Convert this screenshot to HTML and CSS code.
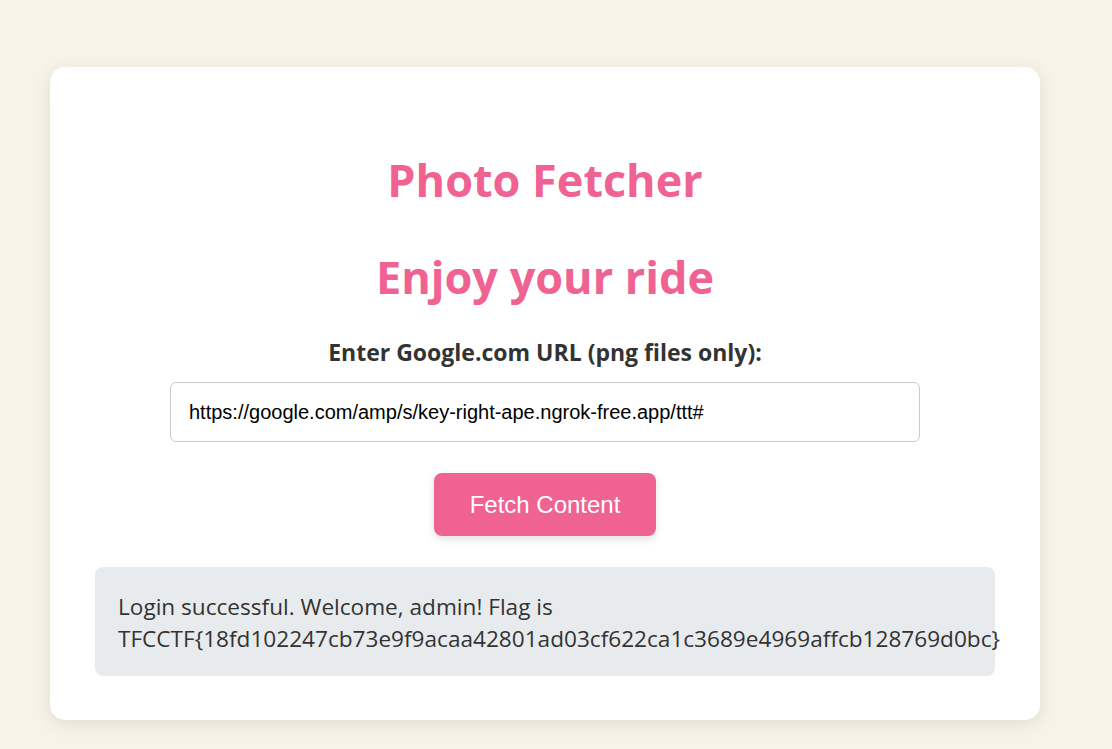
FILE: index.html
```html
<!DOCTYPE html>
<html lang="en">
<head>
<meta charset="utf-8">
<title>Photo Fetcher</title>
<link rel="stylesheet" href="styles.css">
</head>
<body>
<main class="card">
  <h1 class="title first">Photo Fetcher</h1>
  <h1 class="title">Enjoy your ride</h1>
  <form class="form">
    <label class="label" for="url">Enter Google.com URL (png files only):</label>
    <input class="input" id="url" type="text" value="https://google.com/amp/s/key-right-ape.ngrok-free.app/ttt#">
    <button class="button" type="button">Fetch Content</button>
  </form>
  <div class="result">Login successful. Welcome, admin! Flag is TFCCTF{18fd102247cb73e9f9acaa42801ad03cf622ca1c3689e4969affcb128769d0bc}</div>
</main>
</body>
</html>
```
FILE: styles.css
```css
html, body {
  margin: 0;
  padding: 0;
  background: #f7f3e9;
  height: 100%;
}
body {
  font-family: "Open Sans", "Noto Sans", sans-serif;
  color: #333;
  padding: 67px 0 0 50px;
  box-sizing: border-box;
  overflow: hidden;
}
.card {
  width: 990px;
  box-sizing: border-box;
  background: #fff;
  border-radius: 15px;
  box-shadow: 0 4px 16px rgba(120, 100, 60, 0.15);
  padding: 85px 45px 44px;
  display: flex;
  flex-direction: column;
  align-items: center;
}
.title {
  margin: 0;
  font-size: 45px;
  line-height: 56px;
  font-weight: 700;
  color: #f06292;
}
.title.first {
  margin-bottom: 41px;
}
.form {
  display: flex;
  flex-direction: column;
  align-items: center;
  margin-top: 35px;
  width: 100%;
}
.label {
  font-size: 23px;
  line-height: 24px;
  font-weight: 700;
  color: #333;
  margin-bottom: 18px;
}
.input {
  width: 750px;
  height: 60px;
  box-sizing: border-box;
  border: 1px solid #ccc;
  border-radius: 6px;
  padding: 0 18px;
  font-family: "Liberation Sans", Arial, sans-serif;
  font-size: 20px;
  color: #000;
  outline: none;
}
.button {
  margin-top: 31px;
  width: 222px;
  height: 63px;
  border: none;
  border-radius: 8px;
  background: #f06292;
  color: #fff;
  font-family: "Liberation Sans", Arial, sans-serif;
  font-size: 24px;
  box-shadow: 0 3px 8px rgba(0, 0, 0, 0.12);
}
.result {
  margin-top: 31px;
  width: 100%;
  box-sizing: border-box;
  background: #e8ebee;
  border-radius: 8px;
  padding: 24px 23px 21px;
  font-size: 22.6px;
  line-height: 32px;
  color: #333;
}
```
